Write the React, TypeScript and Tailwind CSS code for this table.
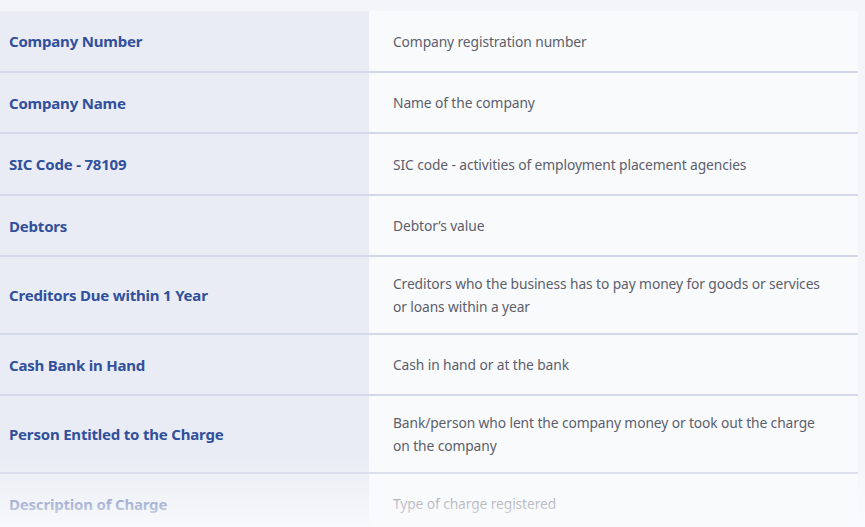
import React from 'react';

const rows = [
  { label: 'Company Number', desc: 'Company registration number' },
  { label: 'Company Name', desc: 'Name of the company' },
  { label: 'SIC Code - 78109', desc: 'SIC code - activities of employment placement agencies' },
  { label: 'Debtors', desc: 'Debtor’s value' },
  {
    label: 'Creditors Due within 1 Year',
    desc: 'Creditors who the business has to pay money for goods or services or loans within a year',
  },
  { label: 'Cash Bank in Hand', desc: 'Cash in hand or at the bank' },
  {
    label: 'Person Entitled to the Charge',
    desc: 'Bank/person who lent the company money or took out the charge on the company',
  },
  { label: 'Description of Charge', desc: 'Type of charge registered' },
];

export default function App() {
  return (
    <div
      className="relative h-[527px] overflow-hidden bg-[#f3f5f9] pt-[11px]"
      style={{ fontFamily: '"Noto Sans", "Open Sans", sans-serif' }}
    >
      {/* table */}
      <div className="w-[858px]">
        {rows.map((row, i) => (
          <div
            key={row.label}
            className={`flex ${i < rows.length - 1 ? 'border-b-2 border-[#d4d9ea]' : ''}`}
          >
            <div className="flex min-h-[59.5px] w-[369px] shrink-0 items-center bg-[#e9ecf4] pl-[9px] pt-px text-[15px] font-bold tracking-[-0.2px] text-[#31509c]">
              {row.label}
            </div>
            <div className="flex min-h-[59.5px] flex-1 items-center bg-[#f9fafc] pt-[15px] pb-[14.5px] pl-6 pr-9 text-[13.8px] leading-[23px] tracking-[-0.1px] text-[#5b5f6c]">
              {row.desc}
            </div>
          </div>
        ))}
      </div>
      {/* bottom fade */}
      <div className="pointer-events-none absolute inset-x-0 bottom-0 h-[70px] bg-gradient-to-b from-transparent to-[#f9fafc]/90" />
    </div>
  );
}
